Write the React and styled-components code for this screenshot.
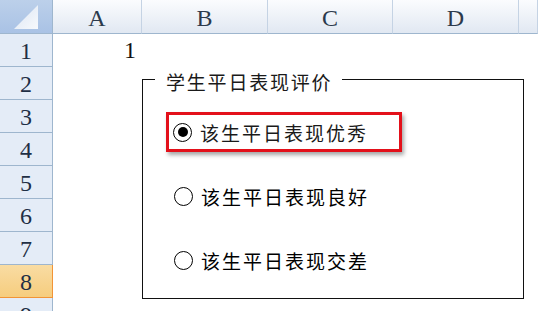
import React from 'react';
import styled, { createGlobalStyle } from 'styled-components';

const GlobalStyle = createGlobalStyle`
  html, body {
    margin: 0;
    padding: 0;
    background: #ffffff;
  }
  * {
    box-sizing: border-box;
  }
`;

const Sheet = styled.div`
  position: relative;
  display: grid;
  grid-template-columns: 53px 89px 126px 125px 126px 19px;
  grid-template-rows: 34px repeat(9, 33px);
  width: 538px;
  height: 311px;
  overflow: hidden;
  background: #ffffff;
  font-family: 'Liberation Serif', 'Times New Roman', serif;
`;

const Corner = styled.div`
  display: flex;
  align-items: center;
  justify-content: center;
  background: linear-gradient(#bcd0ea, #a9c2e5);
  border-right: 1px solid #9eb6ce;
  border-bottom: 1px solid #9eb6ce;
`;

const ColHeader = styled.div`
  display: flex;
  align-items: center;
  justify-content: center;
  padding-top: 4px;
  background: linear-gradient(#fbfcfe, #e1e8f2);
  border-right: 1px solid #c5d3e4;
  border-bottom: 1px solid #9eb6ce;
  color: #2c3a4c;
  font-size: 24px;
`;

const RowHeader = styled.div`
  display: flex;
  align-items: center;
  justify-content: center;
  padding-top: 3px;
  background: ${(p) => (p.$active ? 'linear-gradient(#f9dca3, #f6cd7e)' : '#e4ecf7')};
  border-right: 1px solid ${(p) => (p.$active ? '#f29436' : '#9eb6ce')};
  border-bottom: 1px solid ${(p) => (p.$active ? '#f29436' : '#9eb6ce')};
  color: #1f2f45;
  font-size: 24px;
`;

const Cell = styled.div`
  display: flex;
  align-items: flex-end;
  justify-content: flex-end;
  padding: 0 6px 3px 0;
  color: #111;
  font-size: 24px;
`;

const GroupBox = styled.div`
  position: absolute;
  left: 142px;
  top: 79px;
  width: 382px;
  height: 220px;
  border: 1px solid #111;
  display: flex;
  flex-direction: column;
  gap: 24px;
  padding: 32px 0 0 31px;
  font-family: 'Noto Sans CJK SC', 'Noto Sans', sans-serif;
`;

const Legend = styled.div`
  position: absolute;
  left: 12px;
  top: -8px;
  padding: 0 10px 0 11px;
  background: #ffffff;
  line-height: 20px;
  font-size: 19px;
  letter-spacing: 1.8px;
  color: #1a1a1a;
`;

const Option = styled.label`
  display: flex;
  align-items: center;
  gap: 8px;
  height: 40px;
  font-size: 19px;
  letter-spacing: 2px;
  color: #000;
  ${(p) =>
    p.$highlighted &&
    `
    width: 236px;
    margin-left: -8px;
    padding-left: 4px;
    border: 3px solid #e3101a;
    box-shadow: 2px 3px 4px rgba(0, 0, 0, 0.35);
    color: #1a1a1a;
  `}
`;

const Radio = styled.span`
  position: relative;
  flex: none;
  width: 19px;
  height: 19px;
  border-radius: 50%;
  border: 1.6px solid #000;
  background: #fff;

  &::after {
    content: '';
    display: ${(p) => (p.$checked ? 'block' : 'none')};
    position: absolute;
    left: 50%;
    top: 50%;
    width: 10px;
    height: 10px;
    margin: -5px 0 0 -5px;
    border-radius: 50%;
    background: #000;
  }
`;

const CornerMark = () => (
  <svg width="28" height="28" viewBox="0 0 28 28">
    <defs>
      <linearGradient id="cm" x1="0" y1="0" x2="1" y2="1">
        <stop offset="0" stopColor="#dbe5f3" />
        <stop offset="1" stopColor="#f7f9fc" />
      </linearGradient>
    </defs>
    <polygon points="26,2 26,26 2,26" fill="url(#cm)" />
  </svg>
);

const columns = ['A', 'B', 'C', 'D', ''];
const rows = [1, 2, 3, 4, 5, 6, 7, 8, 9];

const options = [
  { label: '该生平日表现优秀', checked: true, highlighted: true },
  { label: '该生平日表现良好' },
  { label: '该生平日表现交差' },
];

export default function App() {
  return (
    <>
      <GlobalStyle />
      <Sheet>
        <Corner>
          <CornerMark />
        </Corner>
        {columns.map((c, i) => (
          <ColHeader key={i}>{c}</ColHeader>
        ))}
        {rows.map((r) => (
          <React.Fragment key={r}>
            <RowHeader $active={r === 8}>{r}</RowHeader>
            {columns.map((c, i) => (
              <Cell key={i}>{r === 1 && c === 'A' ? '1' : ''}</Cell>
            ))}
          </React.Fragment>
        ))}

        <GroupBox>
          <Legend>学生平日表现评价</Legend>
          {options.map((o) => (
            <Option key={o.label} $highlighted={o.highlighted}>
              <Radio $checked={o.checked} />
              {o.label}
            </Option>
          ))}
        </GroupBox>
      </Sheet>
    </>
  );
}
